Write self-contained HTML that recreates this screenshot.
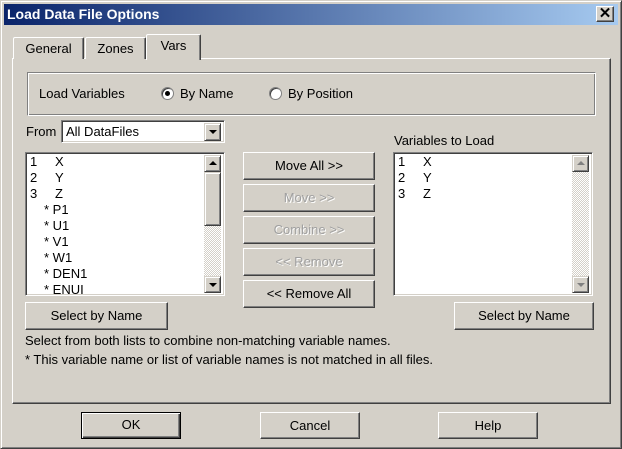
<!DOCTYPE html>
<html><head><style>
*{box-sizing:border-box;margin:0;padding:0}
body{width:622px;height:449px;background:#d4d0c8;font-family:"Liberation Sans",sans-serif;font-size:13px;color:#000;position:relative;overflow:hidden}
.a{position:absolute}
.win{left:0;top:0;width:622px;height:449px;border:1px solid;border-color:#d4d0c8 #404040 #404040 #d4d0c8;box-shadow:inset 1px 1px 0 #fff,inset -1px -1px 0 #808080}
.title{left:4px;top:4px;width:614px;height:21px;background:linear-gradient(90deg,#0a246a,#a6caf0);color:#fff;font-weight:bold;font-size:14px;line-height:21px;padding-left:3px}
.btn{position:absolute;background:#d4d0c8;border:1px solid;border-color:#fff #404040 #404040 #fff;box-shadow:inset -1px -1px 0 #808080;text-align:center;font-size:13px}
.dis{color:#a0a0a0;text-shadow:1px 1px 0 #fff}
.sunk{position:absolute;background:#fff;border:1px solid;border-color:#808080 #fff #fff #808080;box-shadow:inset 1px 1px 0 #404040,inset -1px -1px 0 #d4d0c8}
.tab{position:absolute;border:1px solid;border-bottom:none;border-color:#fff #404040 #404040 #fff;box-shadow:inset -1px 0 0 #808080;border-radius:2px 2px 0 0;text-align:center;background:#d4d0c8}
.sb{position:absolute;width:17px;background:repeating-conic-gradient(#fff 0 25%,#d4d0c8 0 50%) 0 0/2px 2px}
.arr{position:absolute;left:0;width:17px;height:17px;background:#d4d0c8;border:1px solid;border-color:#d4d0c8 #404040 #404040 #d4d0c8;box-shadow:inset 1px 1px 0 #fff,inset -1px -1px 0 #808080}
.item{position:absolute;left:4px;line-height:16px}
</style></head><body>
<div class="a win"></div>
<div class="a title">Load Data File Options</div>
<div class="btn" style="left:596px;top:6px;width:18px;height:16px;line-height:13px;font-weight:bold;font-size:15px">✕</div>

<!-- panel -->
<div class="a" style="left:12px;top:58px;width:599px;height:346px;border:1px solid;border-color:#fff #404040 #404040 #fff;box-shadow:inset -1px -1px 0 #808080"></div>
<div class="tab" style="left:13px;top:37px;width:71px;height:22px;line-height:22px">General</div>
<div class="tab" style="left:85px;top:37px;width:61px;height:22px;line-height:22px">Zones</div>
<div class="tab" style="left:146px;top:34px;width:55px;height:26px;line-height:22px;border-bottom:none;z-index:2">Vars</div>

<!-- group -->
<div class="a" style="left:27px;top:72px;width:569px;height:44px;border:1px solid;border-color:#808080 #fff #fff #808080;box-shadow:inset 1px 1px 0 #fff,inset -1px -1px 0 #808080"></div>
<div class="a" style="left:39px;top:86px">Load Variables</div>
<div class="a" style="left:161px;top:87px;width:13px;height:13px;border-radius:50%;background:#fff;border:1px solid #808080;box-shadow:inset 1px 1px 0 #404040"><div class="a" style="left:3px;top:3px;width:5px;height:5px;border-radius:50%;background:#000"></div></div>
<div class="a" style="left:180px;top:86px">By Name</div>
<div class="a" style="left:269px;top:87px;width:13px;height:13px;border-radius:50%;background:#fff;border:1px solid #808080;box-shadow:inset 1px 1px 0 #404040"></div>
<div class="a" style="left:288px;top:86px">By Position</div>

<!-- from -->
<div class="a" style="left:26px;top:124px">From</div>
<div class="sunk" style="left:61px;top:120px;width:164px;height:23px"><div class="a" style="left:4px;top:3px">All DataFiles</div>
<div class="arr" style="left:142px;top:2px;height:18px"><div class="a" style="left:4px;top:6px;border:4px solid transparent;border-top:4px solid #000;border-bottom:0;width:0;height:0"></div></div></div>

<!-- left list -->
<div class="sunk" style="left:25px;top:152px;width:200px;height:144px;overflow:hidden">
<div class="item" style="top:1px">1</div><div class="item" style="left:29px;top:1px">X</div>
<div class="item" style="top:17px">2</div><div class="item" style="left:29px;top:17px">Y</div>
<div class="item" style="top:33px">3</div><div class="item" style="left:29px;top:33px">Z</div>
<div class="item" style="left:18px;top:49px">* P1</div>
<div class="item" style="left:18px;top:65px">* U1</div>
<div class="item" style="left:18px;top:81px">* V1</div>
<div class="item" style="left:18px;top:97px">* W1</div>
<div class="item" style="left:18px;top:113px">* DEN1</div>
<div class="item" style="left:18px;top:129px">* ENUI</div>
<div class="sb" style="left:178px;top:2px;height:138px">
<div class="arr" style="top:0"><div class="a" style="left:4px;top:5px;border:4px solid transparent;border-bottom:4px solid #000;border-top:0"></div></div>
<div class="arr" style="top:17px;height:54px"></div>
<div class="arr" style="top:121px"><div class="a" style="left:4px;top:6px;border:4px solid transparent;border-top:4px solid #000;border-bottom:0"></div></div>
</div></div>

<div class="btn" style="left:243px;top:152px;width:132px;height:28px;line-height:26px">Move All &gt;&gt;</div>
<div class="btn dis" style="left:243px;top:184px;width:132px;height:28px;line-height:26px">Move &gt;&gt;</div>
<div class="btn dis" style="left:243px;top:216px;width:132px;height:28px;line-height:26px">Combine &gt;&gt;</div>
<div class="btn dis" style="left:243px;top:248px;width:132px;height:28px;line-height:26px">&lt;&lt; Remove</div>
<div class="btn" style="left:243px;top:280px;width:132px;height:28px;line-height:26px">&lt;&lt; Remove All</div>

<div class="a" style="left:394px;top:133px">Variables to Load</div>
<div class="sunk" style="left:393px;top:152px;width:200px;height:144px;overflow:hidden">
<div class="item" style="top:1px">1</div><div class="item" style="left:29px;top:1px">X</div>
<div class="item" style="top:17px">2</div><div class="item" style="left:29px;top:17px">Y</div>
<div class="item" style="top:33px">3</div><div class="item" style="left:29px;top:33px">Z</div>
<div class="sb" style="left:178px;top:2px;height:138px">
<div class="arr" style="top:0"><div class="a" style="left:4px;top:5px;border:4px solid transparent;border-bottom:4px solid #808080;border-top:0"></div></div>
<div class="arr" style="top:121px"><div class="a" style="left:4px;top:6px;border:4px solid transparent;border-top:4px solid #808080;border-bottom:0"></div></div>
</div></div>

<div class="btn" style="left:25px;top:302px;width:143px;height:28px;line-height:26px">Select by Name</div>
<div class="btn" style="left:454px;top:302px;width:140px;height:28px;line-height:26px">Select by Name</div>

<div class="a" style="left:25px;top:333px">Select from both lists to combine non-matching variable names.</div>
<div class="a" style="left:25px;top:352px">* This variable name or list of variable names is not matched in all files.</div>

<div class="btn" style="left:81px;top:412px;width:100px;height:27px;line-height:24px;border:1px solid #000;box-shadow:inset 1px 1px 0 #fff,inset -1px -1px 0 #404040,inset -2px -2px 0 #808080">OK</div>
<div class="btn" style="left:260px;top:412px;width:100px;height:27px;line-height:25px">Cancel</div>
<div class="btn" style="left:438px;top:412px;width:100px;height:27px;line-height:25px">Help</div>
</body></html>
